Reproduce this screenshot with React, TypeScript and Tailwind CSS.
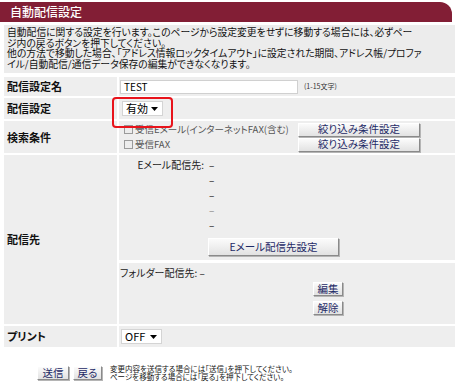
import React from 'react';

// Bevelled grey button used throughout the form
const Btn: React.FC<{ label: string; className?: string }> = ({ label, className = '' }) => (
  <button
    className={`shrink-0 flex items-center justify-center h-[14px] bg-gradient-to-b from-[#fbfbfb] to-[#e2e2e2] border border-t-[#ffffff] border-l-[#ffffff] border-r-[#8a8a8a] border-b-[#8a8a8a] shadow-[1px_1px_0_#b5b5b5] text-[10.5px] leading-none text-[#1e2a66] ${className}`}
  >
    {label}
  </button>
);

const Dropdown: React.FC<{ value: string }> = ({ value }) => (
  <div className="flex items-center h-[15px] w-[41px] bg-white border border-[#d4d4d4] pl-[3px] text-[11px] leading-none text-black">
    <span className="flex-1">{value}</span>
    <svg width="7" height="4" viewBox="0 0 7 4" className="mr-[4px]">
      <path d="M0 0h7L3.5 4z" fill="#000" />
    </svg>
  </div>
);

const Check: React.FC<{ label: string }> = ({ label }) => (
  <label className="w-[174px] shrink-0 flex items-center gap-[2px] text-[9.5px] leading-none text-[#555] whitespace-nowrap">
    <span className="shrink-0 w-[9px] h-[9px] border border-[#9a9a9a] bg-[#ececec]" />
    {label}
  </label>
);

const Label: React.FC<{ children: React.ReactNode }> = ({ children }) => (
  <div className="bg-[#eeeeee] flex items-center pl-[3px] text-[11px] font-bold text-[#111]">{children}</div>
);

const DESC = [
  '自動配信に関する設定を行います。このページから設定変更をせずに移動する場合には、必ずペー',
  'ジ内の戻るボタンを押下してください。',
  '他の方法で移動した場合、「アドレス情報ロックタイムアウト」に設定された期間、アドレス帳/プロファ',
  'イル/自動配信/通信データ保存の編集ができなくなります。'
];

export default function App() {
  return (
    <div
      className="w-[460px] h-[386px] bg-white pt-[2px] [font-feature-settings:'palt']"
      style={{ fontFamily: '"Noto Sans CJK JP", "Noto Sans", sans-serif' }}
    >
      {/* Title bar */}
      <div className="w-[452px] h-[20px] bg-[#821e35] rounded-tr-[12px] flex items-center pl-[10px] text-white text-[12px] font-medium">
        自動配信設定
      </div>

      <div className="w-[451px] ml-[4px]">
        {/* Description */}
        <div className="mt-[3px] bg-[#ececec] pl-[3px] pt-[2px] h-[48px] text-[9.8px] leading-[10.5px] text-[#111]">
          {DESC.map(line => (
            <div key={line} className="whitespace-nowrap">{line}</div>
          ))}
        </div>

        {/* Settings table */}
        <div className="mt-[4px] grid grid-cols-[113px_1fr] gap-[2px]">
          <Label>配信設定名</Label>
          <div className="bg-[#eeeeee] h-[19px] flex items-center pl-[1px]">
            <div className="w-[178px] h-[14px] bg-white border border-[#d0d0d0] flex items-center pl-[3px] text-[10px] leading-none">TEST</div>
            <span className="ml-[6px] text-[7px] text-[#333]">(1-15文字)</span>
          </div>

          <Label>配信設定</Label>
          <div className="bg-[#eeeeee] h-[21px] flex items-center pl-[3px] relative">
            <Dropdown value="有効" />
            <div className="absolute left-[-7px] top-[-1px] w-[61px] h-[31px] border-2 border-[#e8131b] rounded-[4px]" />
          </div>

          <Label>検索条件</Label>
          <div className="bg-[#eeeeee] h-[32px] flex flex-col justify-center gap-[1px] pl-[5px]">
            <div className="flex items-center">
              <Check label="受信Eメール(インターネットFAX(含む)" />
              <Btn label="絞り込み条件設定" className="w-[122px]" />
            </div>
            <div className="flex items-center">
              <Check label="受信FAX" />
              <Btn label="絞り込み条件設定" className="w-[122px]" />
            </div>
          </div>

          <Label>配信先</Label>
          <div className="flex flex-col gap-[3px]">
            <div className="bg-[#eeeeee] h-[105px] pt-[5px] text-[10px] leading-none text-[#222]">
              <div className="flex">
                <div className="w-[85px] text-right">Eメール配信先:</div>
                <div className="ml-[5px] flex flex-col gap-[5px]">
                  <span>–</span>
                  <span>–</span>
                  <span>–</span>
                  <span className="text-[#888]">–</span>
                  <span>–</span>
                </div>
              </div>
              <Btn label="Eメール配信先設定" className="ml-[89px] mt-[8px] w-[131px] h-[18px]" />
            </div>
            <div className="bg-[#eeeeee] h-[61px] pt-[5px] pl-[1px] text-[10px] leading-none text-[#222]">
              <div>フォルダー配信先: –</div>
              <div className="ml-[193px] mt-[4px] flex flex-col gap-[5px]">
                <Btn label="編集" className="w-[30px] h-[14px]" />
                <Btn label="解除" className="w-[30px] h-[14px]" />
              </div>
            </div>
          </div>

          <Label>プリント</Label>
          <div className="bg-[#eeeeee] h-[21px] flex items-center pl-[2px]">
            <Dropdown value="OFF" />
          </div>
        </div>

        {/* Footer actions */}
        <div className="mt-[18px] flex items-center pl-[33px]">
          <Btn label="送信" className="w-[32px] h-[14px]" />
          <Btn label="戻る" className="ml-[4px] w-[29px] h-[14px]" />
          <div className="ml-[8px] text-[7.5px] leading-[8px] text-[#111]">
            <div>変更内容を送信する場合には「送信」を押下してください。</div>
            <div>ページを移動する場合には「戻る」を押下してください。</div>
          </div>
        </div>
      </div>
    </div>
  );
}
